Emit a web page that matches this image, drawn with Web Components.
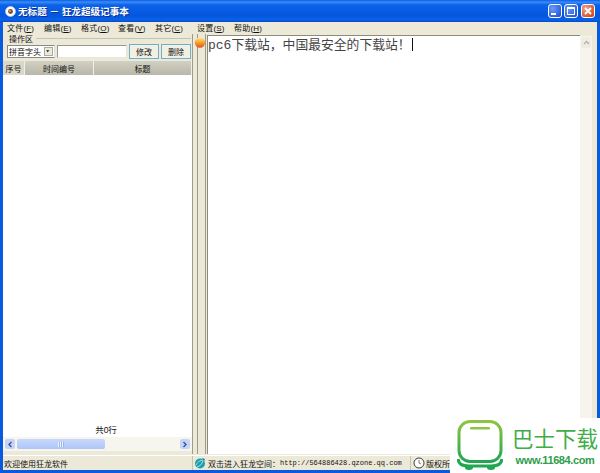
<!DOCTYPE html>
<html lang="zh">
<head>
<meta charset="utf-8">
<title>无标题 - 狂龙超级记事本</title>
<style>
  html, body { margin: 0; padding: 0; background: #fff; }
  body { font: 8px "Liberation Sans", "Noto Sans CJK SC", sans-serif; color: #111; }
</style>
</head>
<body>
<note-app></note-app>
<script>
// small helper: every element gets an open shadow root with its own html
class Base extends HTMLElement {
  constructor() {
    super();
    this.attachShadow({ mode: 'open' }).innerHTML = this.constructor.html;
  }
}

class TitleBar extends Base {
  static html = `
    <style>
      :host { display: flex; align-items: center; height: 22px; flex: none; padding: 0 5px 0 5px; box-sizing: border-box;
        background: linear-gradient(#0a5ce6 0, #3a8cf6 2px, #0b62e8 5px, #0457dd 16px, #0a62ea 20px, #0348c4 22px); }
      .icon { width: 11px; height: 11px; flex: none; }
      .text { color: #fff; font-size: 9.6px; font-weight: bold; margin-left: 2px; white-space: pre; text-shadow: 1px 1px 0 #0a2f8f; flex: 1; }
      .btns { display: flex; gap: 2px; }
      .btn { width: 14px; height: 14px; border: 1px solid #fff; border-radius: 3px; box-sizing: border-box;
        background: radial-gradient(circle at 30% 30%, #6b9cf5, #2356d8 85%); display: flex; }
      .btn.close { background: radial-gradient(circle at 30% 30%, #f0a58a, #d8451f 85%); margin-left: 1px; }
      svg { width: 12px; height: 12px; }
    </style>
    <svg class="icon" viewBox="0 0 11 11"><circle cx="5.5" cy="5.5" r="5" fill="#fff" stroke="#cfd8f0" stroke-width=".6"/><circle cx="5.5" cy="5.5" r="2.4" fill="#7a4a32"/><circle cx="5" cy="5" r="1" fill="#e8a552"/></svg>
    <span class="text">无标题 － 狂龙超级记事本</span>
    <div class="btns">
      <div class="btn"><svg viewBox="0 0 12 12"><rect x="2" y="8" width="5" height="2" fill="#fff"/></svg></div>
      <div class="btn"><svg viewBox="0 0 12 12"><rect x="2.5" y="2.5" width="7" height="7" fill="none" stroke="#fff"/><rect x="2" y="2" width="8" height="2" fill="#fff"/></svg></div>
      <div class="btn close"><svg viewBox="0 0 12 12"><path d="M3 3l6 6M9 3l-6 6" stroke="#fff" stroke-width="1.8"/></svg></div>
    </div>`;
}

class MenuBar extends Base {
  static html = `
    <style>
      :host { display: flex; height: 12px; flex: none; align-items: center; padding: 0 0 2px 4px; box-sizing: border-box;
        font-size: 8px; white-space: nowrap; }
      span { width: 37px; flex: none; letter-spacing: .2px; }
      span.gap { margin-left: 5px; }
      u { text-decoration: underline; }
    </style>
    <span>文件(<u>F</u>)</span><span>编辑(<u>E</u>)</span><span>格式(<u>O</u>)</span><span>查看(<u>V</u>)</span><span>其它(<u>C</u>)</span>
    <span class="gap">设置(<u>S</u>)</span><span>帮助(<u>H</u>)</span>`;
}

class OpPanel extends Base {
  static html = `
    <style>
      :host { display: block; height: 26px; flex: none; box-sizing: border-box; font-size: 8px; }
      .legend { display: flex; align-items: center; height: 10px; padding: 0 0 1px 6px; box-sizing: border-box; gap: 3px; }
      .legend i { flex: 1; height: 0; border-top: 1px solid #c4c2b2; margin-right: 1px; }
      .row { display: flex; align-items: stretch; height: 15px; padding-left: 4px; }
      .combo { width: 48px; margin: 1px 0; box-sizing: border-box; background: #fff; border: 1px solid #8a8a80; border-right-color: #ddd; display: flex; align-items: center; padding-left: 1px; white-space: nowrap; }
      .combo b { font-weight: normal; flex: 1; }
      .combo svg { width: 9px; height: 9px; flex: none; background: #ece9d8; border: 1px solid #aaa; box-sizing: border-box; margin-right: 1px; }
      .input { width: 70px; margin: 1px 0 1px 2px; box-sizing: border-box; background: #fff; border: 1px solid #9c9a8c; border-right-color: #e8e6da; border-bottom-color: #e8e6da; }
      .btn { width: 30px; margin-left: 2px; box-sizing: border-box; border: 1px solid #6fb0c8; background: #f2f0e4; display: flex; align-items: center; justify-content: center; }
    </style>
    <div class="legend"><span>操作区</span><i></i></div>
    <div class="row">
      <div class="combo"><b>拼音字头</b><svg viewBox="0 0 9 9"><path d="M1.5 3h4L3.5 5.5z" fill="#111"/></svg></div>
      <div class="input"></div>
      <div class="btn">修改</div>
      <div class="btn">删除</div>
    </div>`;
}

class RecordList extends Base {
  static html = `
    <style>
      :host { display: flex; flex-direction: column; flex: 1; min-height: 0; font-size: 8px; }
      .head { display: grid; grid-template-columns: 22px 69px 1fr; height: 14px; margin-top: 1px; flex: none; background: #c6c4b6; }
      .head div { display: flex; align-items: center; justify-content: center; border-right: 1px solid #f2f0e6; box-sizing: border-box;
        background: linear-gradient(#d2d0c2, #b9b7aa); }
      .head div:first-child { background: #dad7c8; }
      .body { flex: 1; background: #fff; display: flex; flex-direction: column; justify-content: flex-end; align-items: center; }
      .count { height: 14px; margin-left: 17px; font-size: 8.5px; }
    </style>
    <div class="head"><div>序号</div><div>时间编号</div><div>标题</div></div>
    <div class="body"><span class="count">共0行</span></div>`;
}

class HScroll extends Base {
  static html = `
    <style>
      :host { display: flex; height: 14px; flex: none; padding: 2px 2px 2px 2px; box-sizing: border-box; background: #f7f6ee; gap: 2px; align-items: stretch; }
      .arrow { width: 10px; border-radius: 2px; background: #c5d5fa; display: flex; align-items: center; justify-content: center; flex: none; }
      .arrow svg { width: 6px; height: 7px; }
      .thumb { width: 88px; border-radius: 2px; background: linear-gradient(#c8d8fb, #aec6f6); display: flex; align-items: center; justify-content: center; flex: none; }
      .thumb i { width: 6px; height: 5px; background: repeating-linear-gradient(90deg, #eef3ff 0 1px, #9db6ea 1px 2px); }
      .track { flex: 1; }
    </style>
    <div class="arrow"><svg viewBox="0 0 6 7"><path d="M4.500 1L2 3.500 4.500 6" fill="none" stroke="#36559a" stroke-width="1.4"/></svg></div>
    <div class="thumb"><i></i></div>
    <div class="track"></div>
    <div class="arrow"><svg viewBox="0 0 6 7"><path d="M1.500 1L4 3.500 1.500 6" fill="none" stroke="#36559a" stroke-width="1.4"/></svg></div>`;
}

class VScroll extends Base {
  static html = `
    <style>
      :host { display: flex; flex-direction: column; width: 12px; flex: none; background: #f6f4ec; box-sizing: border-box; margin-top: 2px; padding-top: 1px; }
      .arrow { height: 11px; margin: 0 1px; background: #eeece2; border-radius: 2px; display: flex; align-items: center; justify-content: center; }
      svg { width: 7px; height: 5px; }
    </style>
    <div class="arrow"><svg viewBox="0 0 7 5"><path d="M1 4l2.500-2.500L6 4" fill="none" stroke="#b4b3a6" stroke-width="1.3"/></svg></div>`;
}

class SplitBar extends Base {
  static html = `
    <style>
      :host { display: block; width: 15px; flex: none; box-sizing: border-box; background: linear-gradient(90deg, #9c9b8e 0 1px, #ece9d8 1px 5px, #9c9b8e 5px 6px, #ece9d8 6px 13px, #9c9b8e 13px 14px, #ece9d8 14px); }
      svg { display: block; width: 12px; height: 11px; margin: 3px 0 0 2px; }
    </style>
    <svg viewBox="0 0 12 11">
      <defs><linearGradient id="g" x1="0" y1="0" x2="0" y2="1"><stop offset="0" stop-color="#fbeea8"/><stop offset=".45" stop-color="#f7a92c"/><stop offset="1" stop-color="#e2521c"/></linearGradient></defs>
      <circle cx="6" cy="5.500" r="5.200" fill="url(#g)"/>
    </svg>`;
}

class EditorPane extends Base {
  static html = `
    <style>
      :host { display: block; flex: 1; min-width: 0; margin-top: 1px; background: #fff; box-sizing: border-box; border-left: 1px solid #8d8b7c; border-top: 1px solid #8d8b7c; font: 12.8px/15px "Noto Sans CJK SC", sans-serif; color: #444; white-space: nowrap; }
      .latin { font: 13px "Liberation Mono", monospace; }
      .caret { display: inline-block; width: 1px; height: 13px; background: #111; margin-left: 1px; vertical-align: -2px; }
    </style>
    <span class="latin">pc6</span>下载站，中国最安全的下载站！<span class="caret"></span>`;
}

class StatusBar extends Base {
  static html = `
    <style>
      :host { display: flex; height: 14px; flex: none; font-size: 8px; white-space: nowrap; border-top: 1px solid #fff; }
      .pane { display: flex; align-items: center; overflow: hidden; box-sizing: border-box; border-right: 1px solid #c6c4b4; }
      .p1 { width: 190px; padding-left: 1px; }
      .p2 { width: 218px; padding-left: 1px; }
      .p3 { width: 40px; padding-left: 2px; border-right: 0; }
      svg { width: 12px; height: 12px; flex: none; margin-right: 2px; }
      .p3 svg { margin-right: 1px; }
      .url { font: 7px "Liberation Mono", monospace; }
    </style>
    <div class="pane p1">欢迎使用狂龙软件</div>
    <div class="pane p2">
      <svg viewBox="0 0 12 12"><circle cx="6" cy="6.500" r="5" fill="#1f9db0"/><path d="M2 8c2-4 5-5 9-5M3 10c3-1 5-3 6-6" stroke="#9fe8d8" stroke-width="1" fill="none"/><path d="M8 1l3 1-1 2z" fill="#1c6fb8"/></svg>
      <span>双击进入狂龙空间：</span><span class="url">http://564886428.qzone.qq.com</span>
    </div>
    <div class="pane p3">
      <svg viewBox="0 0 12 12"><circle cx="6" cy="6" r="5" fill="#fff" stroke="#3a3a3a"/><path d="M6 3v3l2 1" stroke="#777" fill="none"/></svg>
      <span>版权所</span>
    </div>`;
}

class SiteMark extends Base {
  static html = `
    <style>
      :host { position: absolute; right: 0; bottom: 0; width: 150px; height: 55px; background: #fff; display: flex; box-sizing: border-box; padding: 2px 0 0 7px; }
      svg { width: 46px; height: 51px; flex: none; }
      .txt { margin-left: 9px; width: 86px; flex: none; display: flex; flex-direction: column; align-items: center; }
      .cn { font: 21.5px/24px "Noto Sans CJK SC", sans-serif; color: #3fae49; white-space: nowrap; margin-top: 6px; }
      .en { font: bold 11px/14px "Liberation Sans", sans-serif; letter-spacing: -.4px; color: #2e9e4a; margin-top: 3px; white-space: nowrap; }
    </style>
    <svg viewBox="0 0 46 51">
      <defs><linearGradient id="l" x1="0" y1="0" x2="0" y2="1"><stop offset="0" stop-color="#8cc63f"/><stop offset="1" stop-color="#22a652"/></linearGradient></defs>
      <path d="M13 1.500h20a11 11 0 0 1 11 11v18a11 11 0 0 1-11 11h-20a11 11 0 0 1-11-11v-18a11 11 0 0 1 11-11z" fill="none" stroke="url(#l)" stroke-width="3"/>
      <rect x="13" y="7" width="20" height="2.600" rx="1.300" fill="#8cc63f"/>
      <path d="M1 39c1 6 5 7 11 7h22c6 0 10-1 11-7" fill="none" stroke="#22a652" stroke-width="3.200"/>
      <path d="M8 46h8v1.500a4 2.500 0 0 1-8 0zM30 46h8v1.500a4 2.500 0 0 1-8 0z" fill="#22a652"/>
    </svg>
    <div class="txt"><div class="cn">巴士下载</div><div class="en">www.11684.com</div></div>`;
}

class NoteApp extends Base {
  static html = `
    <style>
      :host { display: flex; flex-direction: column; width: 600px; height: 473px; position: relative; overflow: hidden; background: #0a5ae0; }
      .frame { flex: 1; min-height: 0; margin: 0 3px 3px; background: #ece9d8; display: flex; flex-direction: column; }
      .main { flex: 1; min-height: 0; display: flex; }
      .left { width: 189px; flex: none; display: flex; flex-direction: column; padding-bottom: 3px; box-sizing: border-box; }
      .rest { width: 5px; flex: none; }
      status-bar { margin-top: 1px; }
    </style>
    <title-bar></title-bar>
    <div class="frame">
      <menu-bar></menu-bar>
      <div class="main">
        <div class="left">
          <op-panel></op-panel>
          <record-list></record-list>
          <h-scroll></h-scroll>
        </div>
        <split-bar></split-bar>
        <editor-pane></editor-pane>
        <v-scroll></v-scroll>
        <div class="rest"></div>
      </div>
      <status-bar></status-bar>
    </div>
    <site-mark></site-mark>`;
}

customElements.define('title-bar', TitleBar);
customElements.define('menu-bar', MenuBar);
customElements.define('op-panel', OpPanel);
customElements.define('record-list', RecordList);
customElements.define('h-scroll', HScroll);
customElements.define('v-scroll', VScroll);
customElements.define('split-bar', SplitBar);
customElements.define('editor-pane', EditorPane);
customElements.define('status-bar', StatusBar);
customElements.define('site-mark', SiteMark);
customElements.define('note-app', NoteApp);
</script>
</body>
</html>
